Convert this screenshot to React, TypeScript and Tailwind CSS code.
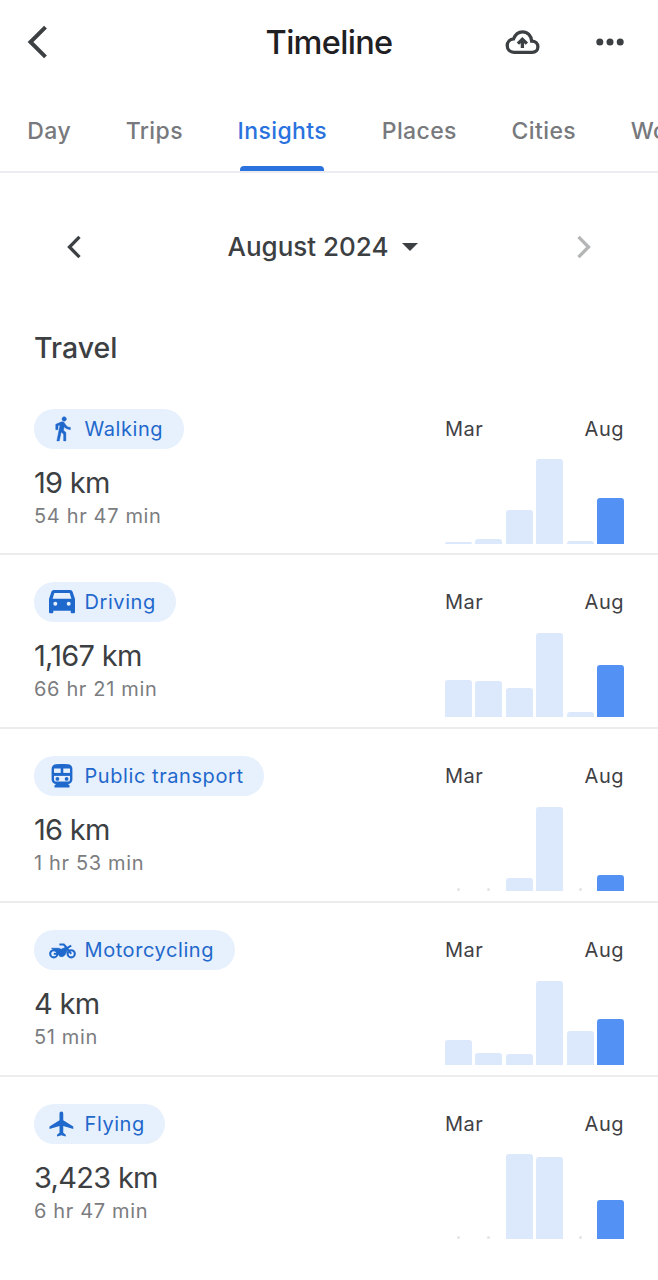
import React from 'react';
import { MdFlight } from 'react-icons/md';

const WalkIcon: React.FC = () => (
  <svg width="27" height="27" viewBox="0 0 24 24" fill="currentColor">
    <path
      stroke="currentColor"
      strokeWidth="0.4"
      d="M13.5 5.5c1.1 0 2-.9 2-2s-.9-2-2-2-2 .9-2 2 .9 2 2 2zM9.8 8.9 7 23h2.1l1.8-8 2.1 2v6h2v-7.5l-2.1-2 .6-3C14.8 12 16.8 13 19 13v-2c-1.9 0-3.5-1-4.3-2.4l-1-1.6c-.4-.6-1-1-1.7-1-.3 0-.5.1-.8.1L6 8.3V13h2V9.6l1.8-.7"
    />
  </svg>
);

const CarIcon: React.FC = () => (
  <svg width="26" height="24" viewBox="0 0 26 24" fill="currentColor">
    <path
      fillRule="evenodd"
      d="M4.8 0h16.4a2.6 2.6 0 0 1 2.4 1.8L26 9v13.3a1 1 0 0 1-1 1h-2.3a1 1 0 0 1-1-1v-1.6H4.3v1.6a1 1 0 0 1-1 1H1a1 1 0 0 1-1-1V9l2.4-7.2A2.6 2.6 0 0 1 4.8 0zM5.3 3l-1.7 5.7h18.8L20.7 3zM6.3 11.8a2 2 0 1 0 0 4 2 2 0 0 0 0-4zm13.4 0a2 2 0 1 0 0 4 2 2 0 0 0 0-4z"
    />
  </svg>
);

const SubwayIcon: React.FC = () => (
  <svg width="22" height="26" viewBox="0 0 22 26" fill="none">
    <rect x="1.8" y="2.4" width="18.4" height="17.4" rx="3.4" stroke="currentColor" strokeWidth="2.4" />
    <path d="M2 11.4h18" stroke="currentColor" strokeWidth="3" />
    <path d="M11 3v8.5" stroke="currentColor" strokeWidth="2.6" />
    <path d="M2 4.6Q3 1 11 1t9 3.6v.9H2z" fill="currentColor" />
    <circle cx="6.4" cy="15.9" r="1.9" fill="currentColor" />
    <circle cx="15.6" cy="15.9" r="1.9" fill="currentColor" />
    <path d="M6 20h10l2.5 2.4v2.2h-15v-2.2z" fill="currentColor" />
  </svg>
);

const MotorcycleIcon: React.FC = () => (
  <svg className="mt-px" width="27" height="16" viewBox="0 0 27 16" fill="none" stroke="currentColor">
    <circle cx="4.8" cy="10.8" r="3.6" strokeWidth="2.1" />
    <circle cx="22.2" cy="10.8" r="3.6" strokeWidth="2.1" />
    <path d="M10.4 1.6h4.4l2.4 2.6 5 6.6M17.6 5.4l4.6-2.8" strokeWidth="2" />
    <path d="M2.6 5.3h6.8l2.8 1 4.2-1.9 2.2 2.2-2.6 5.2q-2 2.8-5.4 1.4L8.2 8.4z" fill="currentColor" strokeWidth=".8" />
    <path d="M4.8 10.8h6" strokeWidth="1.9" />
  </svg>
);

const tabs = ['Day', 'Trips', 'Insights', 'Places', 'Cities', 'World'];

// bar heights in px, March to August; 0 means no data
const travel = [
  { name: 'Walking', icon: <WalkIcon />, distance: '19 km', time: '54 hr 47 min', bars: [2, 5, 34, 84.5, 3, 46] },
  { name: 'Driving', icon: <CarIcon />, distance: '1,167 km', time: '66 hr 21 min', bars: [37.5, 36, 29, 84.5, 5, 52.5] },
  { name: 'Public transport', icon: <SubwayIcon />, distance: '16 km', time: '1 hr 53 min', bars: [0, 0, 13.5, 84.5, 0, 16] },
  { name: 'Motorcycling', icon: <MotorcycleIcon />, distance: '4 km', time: '51 min', bars: [25.5, 12.5, 11, 84.5, 34, 46] },
  { name: 'Flying', icon: <MdFlight size={30} />, distance: '3,423 km', time: '6 hr 47 min', bars: [0, 0, 84.5, 82, 0, 39] },
];

const BarChart: React.FC<{ bars: number[] }> = ({ bars }) => (
  <div className="w-[179px] flex flex-col">
    <div className="flex justify-between text-[20px] leading-[41px] tracking-[0.5px] text-[#3f4145]">
      <span>Mar</span>
      <span>Aug</span>
    </div>
    <div className="flex items-end justify-between h-[94px]">
      {bars.map((height, i) => (
        <div key={i} className="w-[27px] flex justify-center">
          {height > 0 ? (
            <div
              className={`w-full rounded-t-[3px] ${i === bars.length - 1 ? 'bg-[#5491f5]' : 'bg-[#dce8fc]'}`}
              style={{ height }}
            />
          ) : (
            <div className="w-[3px] h-[3px] rounded-full bg-[#e3e4e8]" />
          )}
        </div>
      ))}
    </div>
  </div>
);

export default function App() {
  return (
    <div className="w-[658px] h-[1280px] overflow-hidden bg-white font-['Inter',sans-serif] text-[#3c4043]">
      <header className="h-[84px] px-[26.5px] grid grid-cols-[1fr_auto_1fr] items-center">
        <svg width="20" height="34" viewBox="0 0 20 34" fill="none" stroke="#3c4043" strokeWidth="4">
          <path d="M18.5 2.2 3.5 17l15 14.8" />
        </svg>
        <h1 className="pt-[3px] text-[32.5px] font-medium tracking-[-0.7px] text-[#1f2023]">Timeline</h1>
        <div className="flex items-center justify-end gap-[56px] pr-[7.5px]">
          <svg width="35" height="24" viewBox="0 0 34 24" fill="none" stroke="#3c4043" strokeWidth="3.3">
            <path d="M8.5 22.3C4.6 22.3 1.7 19.4 1.7 15.6 1.7 12 4.4 9.3 8 8.9 9.6 4.8 12.8 1.8 17 1.8c5 0 8.8 3.8 9.2 9.4 3.8 0 6.2 2.3 6.2 5.6 0 3.2-2.4 5.5-5.6 5.5z" />
            <path d="M16.9 18V9.5M12.4 13.6l4.5-4.4 4.5 4.4" strokeWidth="3.3" />
          </svg>
          <svg width="28" height="8" viewBox="0 0 28 8" fill="#3c4043">
            <circle cx="3.8" cy="4" r="3.5" />
            <circle cx="14" cy="4" r="3.5" />
            <circle cx="24.2" cy="4" r="3.5" />
          </svg>
        </div>
      </header>

      <nav className="h-[88.5px] pl-[27.3px] flex gap-[54.6px] border-b-2 border-[#ebecf0] text-[23px] font-medium tracking-[0.4px] text-[#77797d]">
        {tabs.map((tab) => (
          <div key={tab} className="shrink-0 flex flex-col items-center justify-between pt-[26.6px]">
            <span className={`leading-[40px] ${tab === 'Insights' ? 'text-[#2a72de]' : ''}`}>{tab}</span>
            {tab === 'Insights' && <span className="w-[84px] h-[5px] rounded-t-[4px] bg-[#2a72de]" />}
          </div>
        ))}
      </nav>

      <div className="h-[148px] px-[66px] flex items-center justify-between">
        <svg width="16" height="24" viewBox="0 0 16 24" fill="none" stroke="#3c4043" strokeWidth="3.3">
          <path d="M13.5 1.8 3.5 12l10 10.2" />
        </svg>
        <div className="mr-[13px] flex items-center gap-[13px]">
          <span className="pb-px text-[26px] font-medium">August 2024</span>
          <svg width="16" height="8" viewBox="0 0 16 8" fill="#3c4043">
            <path d="M0 0h16L8 8z" />
          </svg>
        </div>
        <svg width="16" height="24" viewBox="0 0 16 24" fill="none" stroke="#b4b5b7" strokeWidth="3.3">
          <path d="m2.5 1.8 10 10.2-10 10.2" />
        </svg>
      </div>

      <h2 className="h-[61px] pl-[34px] text-[28.5px] leading-[53px] font-medium">Travel</h2>

      {travel.map((item, i) => (
        <section
          key={item.name}
          className={`h-[173.85px] pl-[34px] pr-[34px] pt-[27px] flex justify-between ${i < travel.length - 1 ? 'border-b-2 border-[#ebecee]' : ''}`}
        >
          <div className="flex flex-col items-start">
            <div className="h-[40px] pl-[11px] pr-[20.5px] flex items-center rounded-full bg-[#e7f0fd] text-[20px] tracking-[0.57px] text-[#1f68cc]">
              <span className="w-[34px] mr-[5.5px] flex justify-center">{item.icon}</span>
              <span>{item.name}</span>
            </div>
            <p className="mt-[15px] text-[29px] leading-[38px] tracking-[-0.7px]">{item.distance}</p>
            <p className="text-[20px] leading-[29px] tracking-[0.65px] text-[#7b7d80]">{item.time}</p>
          </div>
          <BarChart bars={item.bars} />
        </section>
      ))}
    </div>
  );
}
